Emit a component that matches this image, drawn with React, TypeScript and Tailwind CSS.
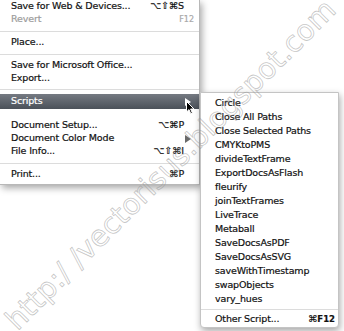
import React from "react";

type Item =
  | { kind: "sep"; h: number; line?: boolean }
  | { kind: "item"; label: string; sc?: string; disabled?: boolean; arrow?: boolean; hl?: boolean; h: number; f12?: boolean };

const mainItems: Item[] = [
  { kind: "item", label: "Save for Web & Devices...", sc: "⌥⇧⌘S", h: 13 },
  { kind: "item", label: "Revert", disabled: true, f12: true, h: 13 },
  { kind: "sep", h: 10, line: true },
  { kind: "item", label: "Place...", h: 13 },
  { kind: "sep", h: 10, line: true },
  { kind: "item", label: "Save for Microsoft Office...", h: 13 },
  { kind: "item", label: "Export...", h: 13 },
  { kind: "sep", h: 9, line: true },
  { kind: "item", label: "Scripts", arrow: true, hl: true, h: 15 },
  { kind: "sep", h: 10, line: false },
  { kind: "item", label: "Document Setup...", sc: "⌥⌘P", h: 13 },
  { kind: "item", label: "Document Color Mode", arrow: true, h: 13 },
  { kind: "item", label: "File Info...", sc: "⌥⇧⌘I", h: 13 },
  { kind: "sep", h: 10, line: true },
  { kind: "item", label: "Print...", sc: "⌘P", h: 13 },
];

const scripts = [
  "Circle",
  "Close All Paths",
  "Close Selected Paths",
  "CMYKtoPMS",
  "divideTextFrame",
  "ExportDocsAsFlash",
  "fleurify",
  "joinTextFrames",
  "LiveTrace",
  "Metaball",
  "SaveDocsAsPDF",
  "SaveDocsAsSVG",
  "saveWithTimestamp",
  "swapObjects",
  "vary_hues",
];

const font =
  "font-['DejaVu_Sans',sans-serif] text-[9.5px] tracking-[-0.15px] [-webkit-text-stroke:0.2px_currentColor]";

function Arrow({ white }: { white?: boolean }) {
  return (
    <svg width="6" height="8" viewBox="0 0 6 8" className="block mr-[3px]">
      <path d="M0 0 L6 4 L0 8 Z" fill={white ? "#ffffff" : "#6a6a6a"} />
    </svg>
  );
}

export default function App() {
  return (
    <div className="relative w-[344px] h-[331px] overflow-hidden bg-white text-[#111]">
      {/* main menu */}
      <div
        className={`w-[200px] bg-white border-r border-b border-[#b8b8b8] pb-[3px] shadow-[2px_3px_7px_rgba(0,0,0,0.35)] ${font}`}
      >
        {mainItems.map((it, i) =>
          it.kind === "sep" ? (
            <div key={i} className="flex flex-col justify-center" style={{ height: it.h }}>
              {it.line && <div className="h-px bg-[#dcdcdc]" />}
            </div>
          ) : (
            <div
              key={i}
              className={`flex items-center pl-[11px] pr-[5px] ${
                it.hl ? "bg-gradient-to-b from-[#757a82] to-[#4b5159] text-white" : ""
              } ${it.disabled ? "text-[#9c9c9c]" : ""}`}
              style={{ height: it.h }}
            >
              <span className="flex-1 whitespace-nowrap">{it.label}</span>
              {it.sc && <span className="mr-[10px] whitespace-nowrap">{it.sc}</span>}
              {it.f12 && (
                <span className="text-[8px] tracking-normal text-[#a8a8a8]">F12</span>
              )}
              {it.arrow && <Arrow white={it.hl} />}
            </div>
          )
        )}
      </div>

      {/* submenu */}
      <div
        className={`absolute left-[200px] top-[92px] w-[139px] h-[236px] flex flex-col bg-white border border-[#c4c4c4] rounded-b-[4px] pt-[3px] shadow-[1px_3px_7px_rgba(0,0,0,0.35)] ${font}`}
      >
        {scripts.map((s) => (
          <div key={s} className="h-[14px] flex items-center pl-[14px] whitespace-nowrap">
            {s}
          </div>
        ))}
        <div className="h-[6px] flex flex-col justify-center">
          <div className="h-px bg-[#dcdcdc]" />
        </div>
        <div className="h-[14px] flex items-center pl-[14px] pr-[3px]">
          <span className="flex-1 whitespace-nowrap">Other Script...</span>
          <span className="whitespace-nowrap">
            ⌘<span className="text-[8.5px] font-bold tracking-normal">F12</span>
          </span>
        </div>
      </div>

      {/* mouse cursor */}
      <svg className="absolute left-[186px] top-[101px]" width="9" height="14" viewBox="0 0 9 14">
        <path
          d="M0.5 0.5 L0.5 11 L3 8.6 L4.8 12.8 L6.4 12.1 L4.6 8 L8 8 Z"
          fill="#000"
          stroke="#fff"
          strokeWidth="1"
          strokeLinejoin="round"
        />
      </svg>

      {/* watermark */}
      <div className="pointer-events-none absolute left-[171px] top-[165px] -translate-x-1/2 -translate-y-1/2 -rotate-45 whitespace-nowrap font-['DejaVu_Sans',sans-serif] text-[29px] text-transparent [-webkit-text-stroke:0.8px_rgba(150,150,150,0.55)]">
        http:/ /vectorisus.blogspot.com
      </div>
    </div>
  );
}
